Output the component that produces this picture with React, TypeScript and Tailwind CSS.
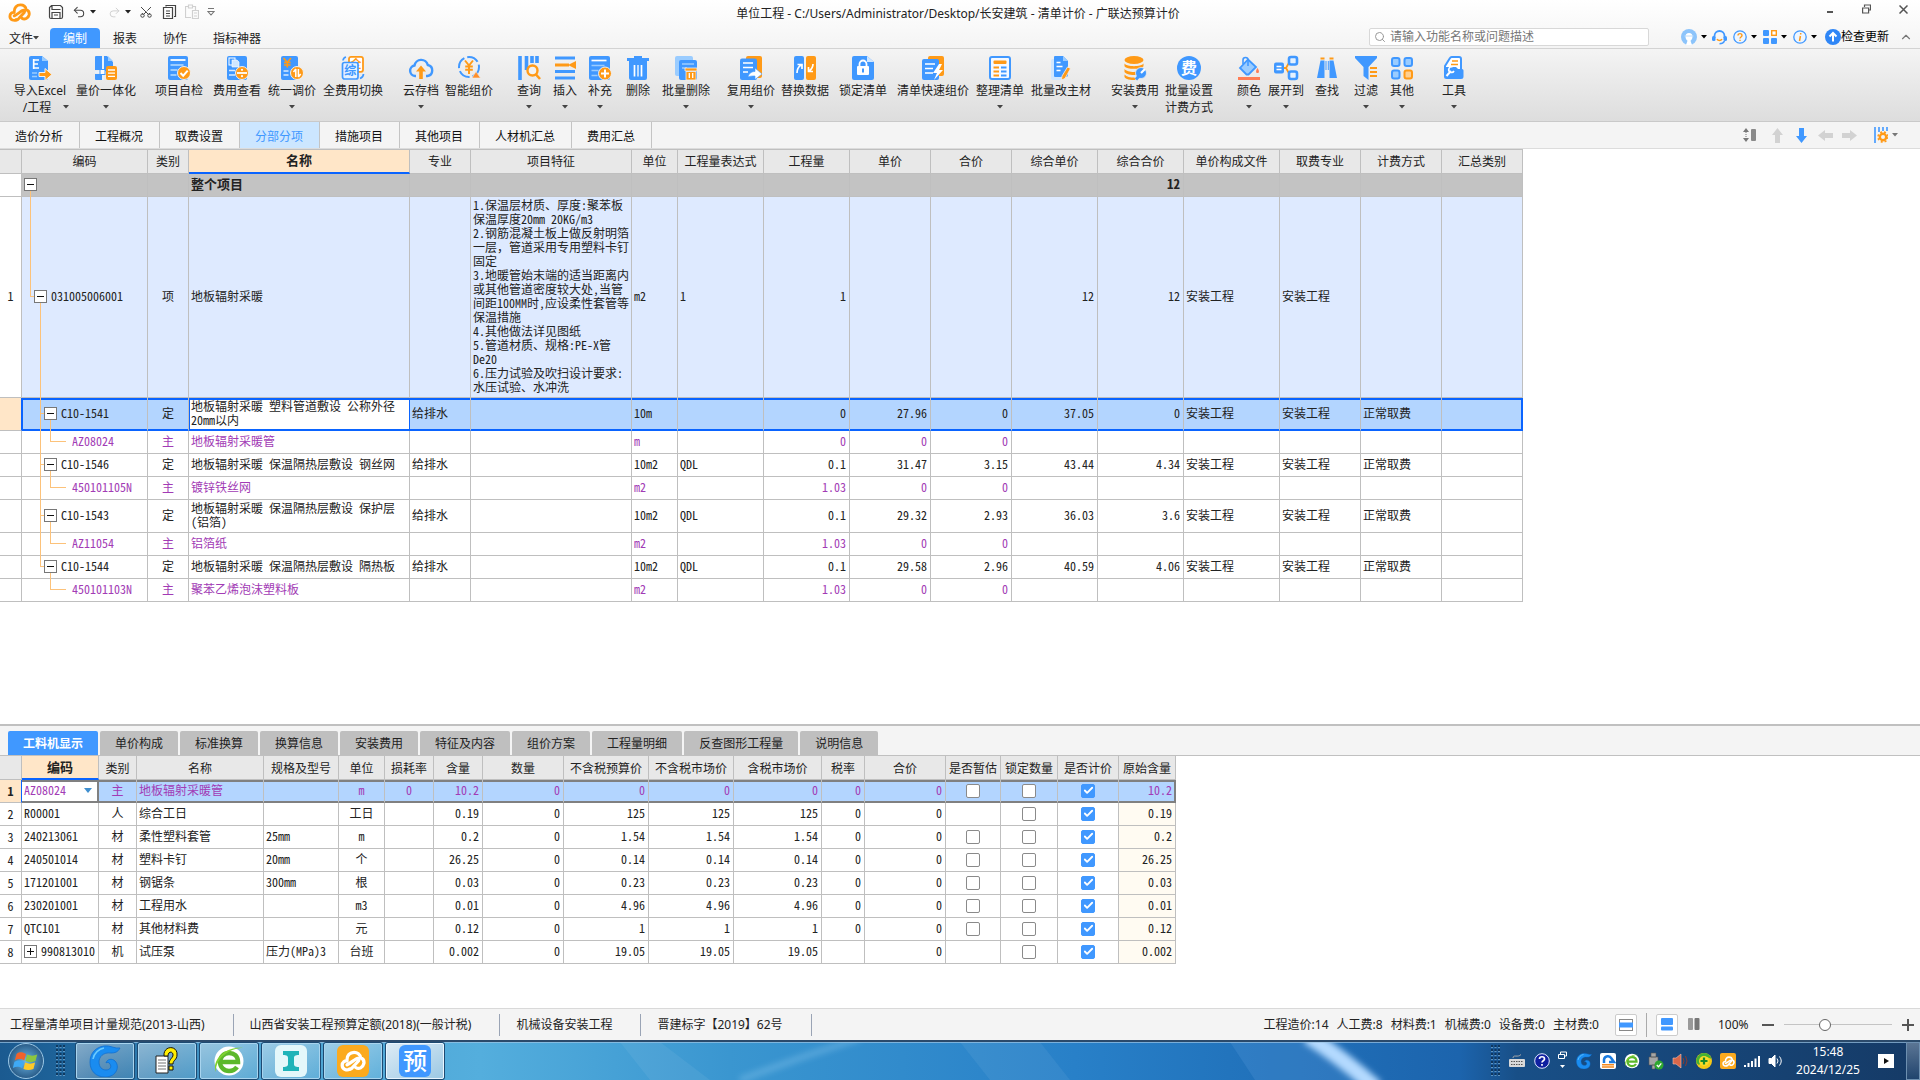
import React from "react";
import { Check, ChevronUp, Search, Scissors, Undo2, Redo2 } from "lucide-react";

const B = "#4098ff";
const O = "#ff9a17";
const L = "#9accff";

const ui = "font-['Noto_Sans','Noto_Sans_CJK_SC',sans-serif]";
const grid = "font-['Noto_Sans_Mono_CJK_SC','Noto_Sans_CJK_SC',monospace]";

function Ico({ children }: { children: React.ReactNode }) {
  return (
    <svg viewBox="0 0 22 24" width="22" height="24" aria-hidden="true" className="overflow-visible">
      {children}
    </svg>
  );
}

const Glyph = ({ x, y, size, fill, children }: { x: number; y: number; size: number; fill: string; children: string }) => (
  <text x={x} y={y} fontSize={size} fill={fill} fontWeight="700" textAnchor="middle" fontFamily="Noto Sans CJK SC, sans-serif">
    {children}
  </text>
);

const icons: Record<string, React.ReactNode> = {
  excel: (
    <Ico>
      <path d="M2 0h11l6 5v17a2 2 0 0 1-2 2H2a2 2 0 0 1-2-2V2a2 2 0 0 1 2-2z" fill={B} />
      <path d="M13 0l6 5h-6z" fill={L} />
      <path d="M4 4h6M4 8h5M4 12h6M4.700 3v10" stroke="#fff" strokeWidth="1.700" fill="none" />
      <path d="M3 17h5M3 20.500h5" stroke={L} strokeWidth="1.600" />
      <path d="M10 16.500h6v-4l7 6-7 6v-4h-6z" fill={O} stroke="#f2f2f2" strokeWidth="1" />
    </Ico>
  ),
  quantity: (
    <Ico>
      <path d="M1 0h6v14H0V1a1 1 0 0 1 1-1zM0 18h7v6H1a1 1 0 0 1-1-1z" fill={B} />
      <path d="M9 0h3l6 6v4h-5v6H9z" fill={B} />
      <path d="M13 0l5 5h-5z" fill={L} />
      <path d="M0 16h11M8 2v22" stroke="#e8f3ff" strokeWidth="1.500" />
      <rect x="5" y="13.500" width="5" height="5" fill="#fff" stroke={B} />
      <rect x="11" y="10" width="11" height="14" rx="2" fill={O} />
      <path d="M13 14h7M13 17.200h7M13 20.400h7" stroke="#fff" strokeWidth="1.300" />
    </Ico>
  ),
  check: (
    <Ico>
      <rect width="20" height="24" rx="2" fill={B} />
      <path d="M2.500 4h15" stroke="#fff" strokeWidth="1.800" />
      <path d="M2.500 9h13M2.500 14h7M2.500 19h6" stroke={L} strokeWidth="1.800" />
      <circle cx="16" cy="17" r="6.500" fill={O} stroke="#f0f0f0" />
      <path d="M12.500 17l2.700 2.700 4.500-5" stroke="#fff" strokeWidth="2" fill="none" />
    </Ico>
  ),
  view: (
    <Ico>
      <rect x="1" width="20" height="24" rx="2" fill={B} />
      <rect x="3" y="2" width="6" height="7" fill="none" stroke="#fff" />
      <path d="M6 4h5l2 2v5H6z" fill="#cfe6ff" stroke="#fff" strokeWidth=".6" />
      <path d="M3 14.500h6M3 19h6" stroke="#d7eaff" strokeWidth="1.600" />
      <circle cx="16" cy="17" r="6.500" fill={O} stroke="#f0f0f0" />
      <path d="M11 17h10" stroke="#fff" strokeWidth="1.800" />
      <circle cx="16" cy="13.800" r="1.100" fill="#fff" />
      <circle cx="16" cy="20.200" r="1.100" fill="#fff" />
    </Ico>
  ),
  adjust: (
    <Ico>
      <rect x="0" width="17" height="24" rx="2" fill={B} />
      <path d="M2.500 2l3.800 4.500L10 2M6.300 6v5.500M3 6.500h6.600M3 9h6.600" stroke={O} strokeWidth="1.700" fill="none" />
      <path d="M2.500 15h5M2.500 19h5" stroke="#d7eaff" strokeWidth="1.700" />
      <circle cx="16" cy="17" r="6.500" fill={O} stroke="#f0f0f0" />
      <path d="M14.800 13v8M12.500 16l2.300-3M17.400 13v8M19.700 18l-2.300 3" stroke="#fff" strokeWidth="1.500" fill="none" />
    </Ico>
  ),
  switch: (
    <Ico>
      <rect x="7" y=".800" width="14" height="15" rx="2" fill="#fff" stroke={O} strokeWidth="1.800" />
      <Glyph x={14} y={12} size={11} fill={O}>全</Glyph>
      <rect x=".5" y="6.500" width="15.500" height="16.500" rx="2" fill="#e4f1ff" stroke={B} strokeWidth="1.700" />
      <Glyph x={8.2} y={19} size={12} fill={B}>综</Glyph>
      <path d="M1 4.500a4 4 0 0 1 3-3.500M21.500 18a5 5 0 0 1-3.500 4.500" stroke={B} strokeWidth="1.700" fill="none" />
    </Ico>
  ),
  cloud: (
    <Ico>
      <path d="M6 20H5a5.300 5.300 0 0 1-.5-10.500A6.800 6.800 0 0 1 17.800 9 5.600 5.600 0 0 1 17.500 20H16" fill="none" stroke={B} strokeWidth="2.400" />
      <path d="M11 9.500l5 6h-3.200V23H9.200v-7.500H6z" fill={O} />
    </Ico>
  ),
  smart: (
    <Ico>
      <circle cx="11" cy="11" r="10" fill="none" stroke={B} strokeWidth="2" strokeDasharray="12 3" />
      <path d="M7 4.500l4 5 4-5M11 9v9M7.200 10.500h7.600M7.200 13.800h7.600" stroke={O} strokeWidth="2" fill="none" />
      <path d="M14 22l4-6.500 4.500 6.500z" fill="#ff8f2a" stroke="#eee" strokeWidth=".6" />
    </Ico>
  ),
  query: (
    <Ico>
      <path d="M2 0v24M8.500 0v14M14 0v7M19 0v7" stroke={B} strokeWidth="3.600" />
      <circle cx="14.500" cy="14.500" r="5" fill="#f3f3f3" stroke={O} strokeWidth="2.400" />
      <path d="M18 18.500l4 4.500" stroke={O} strokeWidth="2.600" />
    </Ico>
  ),
  insert: (
    <Ico>
      <path d="M1 2h20M1 15.500h20M1 22h20" stroke={B} strokeWidth="3.200" />
      <path d="M1 9h14" stroke={O} strokeWidth="3" />
      <path d="M22 5v8l-8-4z" fill={O} />
    </Ico>
  ),
  supplement: (
    <Ico>
      <rect width="21" height="24" rx="2" fill={B} />
      <path d="M2.500 4.500h15" stroke="#fff" strokeWidth="1.700" />
      <path d="M2.500 9.500h13M2.500 14.500h7M2.500 19.500h6" stroke={L} strokeWidth="1.700" />
      <circle cx="16" cy="17.500" r="6.500" fill={O} stroke="#f0f0f0" />
      <path d="M16 13.500v8M12 17.500h8" stroke="#fff" strokeWidth="2" />
    </Ico>
  ),
  trash: (
    <Ico>
      <path d="M0 2h7V0h8v2h7v3H0zM2 5h18v17a2 2 0 0 1-2 2H4a2 2 0 0 1-2-2z" fill={B} />
      <path d="M7.500 9v11.500M14.500 9v11.500" stroke="#fff" strokeWidth="1.700" />
      <path d="M11 9v11.500" stroke="#fff" strokeWidth="1.300" />
    </Ico>
  ),
  batchTrash: (
    <Ico>
      <rect x="0" width="18" height="20" rx="2" fill={L} />
      <rect x="4" y="4" width="18" height="20" rx="2" fill={B} />
      <path d="M7 8h12M7 12h5" stroke={L} strokeWidth="1.600" />
      <path d="M10 12h12v3H10zM11 15.500h10V24H11z" fill={O} stroke="#f0f0f0" strokeWidth=".8" />
      <path d="M14.300 17v5M17.700 17v5" stroke="#fff" strokeWidth="1.300" />
    </Ico>
  ),
  reuse: (
    <Ico>
      <rect x="6" width="16" height="22" rx="2" fill={O} />
      <rect x="0" y="2.500" width="17" height="21.500" rx="2" fill={B} />
      <path d="M3 7h10M3 11.500h10M3 16h5" stroke="#fff" strokeWidth="1.700" />
      <path d="M8 21c1-4 4-5.500 7-5.500V12l7 6-7 5.500V20c-3 0-5 0-7 1z" fill="#fff" stroke={B} strokeWidth=".6" />
    </Ico>
  ),
  replace: (
    <Ico>
      <rect width="10" height="24" rx="2" fill={B} />
      <rect x="12" width="10" height="24" rx="2" fill={O} />
      <path d="M3 17c0-4 1-6 4-8M3.500 8.500H8V13" stroke="#fff" strokeWidth="1.700" fill="none" />
      <path d="M19 8c0 3-1 5-4 7M14.500 11v4.500H19" stroke="#fff" strokeWidth="1.700" fill="none" />
    </Ico>
  ),
  lock: (
    <Ico>
      <path d="M2 0h13l7 6v16a2 2 0 0 1-2 2H2a2 2 0 0 1-2-2V2a2 2 0 0 1 2-2z" fill={B} />
      <path d="M15 0l7 6h-7z" fill="#cfe6ff" />
      <rect x="5" y="10" width="12" height="9" rx="1" fill="#fff" />
      <path d="M7.500 10V8a3.500 3.500 0 0 1 7 0v2" stroke="#fff" strokeWidth="1.800" fill="none" />
      <path d="M11 12.500v4" stroke={B} strokeWidth="2" />
    </Ico>
  ),
  quick: (
    <Ico>
      <rect x="6" width="16" height="20" rx="2" fill={O} />
      <rect x="0" y="3" width="17" height="21" rx="2" fill={B} />
      <path d="M3 8h10M3 12.500h8M3 17h8" stroke="#fff" strokeWidth="1.700" />
      <path d="M17 8l-6 9h4l-3 7 9-10h-4l3-6z" fill="#fff" />
    </Ico>
  ),
  arrange: (
    <Ico>
      <rect x="1" y="1" width="20" height="22" rx="2" fill="#f5f9ff" stroke={B} strokeWidth="2" />
      <rect x="4.500" y="4.500" width="13" height="3.500" rx="1" fill={O} />
      <path d="M4.500 11.500h5.500M4.500 15.500h5.500M4.500 19.500h5.500" stroke={O} strokeWidth="2" />
      <path d="M12 11.500h5.500M12 15.500h5.500M12 19.500h5.500" stroke={B} strokeWidth="2" />
    </Ico>
  ),
  material: (
    <Ico>
      <rect x="1" y="3" width="14" height="21" rx="2" fill="#cfe6ff" />
      <path d="M5 0h8l5 5v14a2 2 0 0 1-2 2H5a1 1 0 0 1-1-1V1a1 1 0 0 1 1-1z" fill={B} />
      <path d="M13 0l5 5h-5z" fill={L} />
      <path d="M6.500 6.500h4M6.500 10.500h6M6.500 14.500h4" stroke="#fff" strokeWidth="1.600" />
      <path d="M17.500 11l3 1.500-5.500 10-3.500 1.500.5-4z" fill={O} stroke="#f0f0f0" strokeWidth=".8" />
    </Ico>
  ),
  coins: (
    <Ico>
      <ellipse cx="10" cy="4" rx="9.500" ry="4" fill={O} />
      <path d="M.5 7.500c2 3.500 17 3.500 19 0v2.700c-2 3.500-17 3.500-19 0zM.5 13c2 3 10 3.500 13 2.500l-2 3.500c-4 0-9.500-.5-11-3zM.5 18.500c2 2.500 6 3 10 3l1 2.500c-5 0-10-.5-11-3z" fill={O} />
      <circle cx="17" cy="17" r="5.500" fill={B} stroke="#eee" strokeWidth=".8" />
      <path d="M12 23.500l5-6" stroke={B} strokeWidth="3" />
      <path d="M17 17l4-4" stroke="#fff" strokeWidth="2.200" />
    </Ico>
  ),
  fee: (
    <Ico>
      <circle cx="11" cy="12" r="12" fill={B} />
      <Glyph x={11} y={17.500} size={16} fill="#fff">费</Glyph>
    </Ico>
  ),
  color: (
    <Ico>
      <path d="M10 3.500l8 7.500-7.500 7.500h-2L2 12z" fill={L} stroke={B} strokeWidth="1.800" />
      <path d="M5 8V4a2.500 2.500 0 0 1 5 0v6" stroke={B} strokeWidth="1.600" fill="none" />
      <path d="M19.500 12c2 3 1.800 5 0 5s-2-2 0-5z" fill="#ff7d55" />
      <rect x="0" y="21" width="22" height="3" fill="#ff7d55" />
    </Ico>
  ),
  expand: (
    <Ico>
      <path d="M7 12h4l4-7M11 12l4 7" stroke={O} strokeWidth="1.800" fill="none" />
      <rect x="-1" y="6.500" width="10" height="11" rx="2" fill={B} />
      <path d="M1.500 10.500h5M1.500 13.500h5" stroke="#fff" strokeWidth="1.300" />
      <rect x="14" y="1" width="8" height="7.500" rx="2" fill="#e4f1ff" stroke={B} strokeWidth="2.600" />
      <rect x="14" y="15.500" width="8" height="7.500" rx="2" fill="#e4f1ff" stroke={B} strokeWidth="2.600" />
    </Ico>
  ),
  find: (
    <Ico>
      <path d="M4.500 2.500h4M13.500 2.500h4" stroke={O} strokeWidth="2" />
      <path d="M4.500 4.500h4V22H1zM13.500 4.500h4L21 22h-7.500z" fill={B} />
      <path d="M9.500 5h1v9h-1zM11.800 5h1v9h-1z" fill={B} />
    </Ico>
  ),
  filter: (
    <Ico>
      <path d="M0 0h22v2l-8.500 9v13L8.500 20v-9L0 2z" fill={B} />
      <path d="M15 12h7M15 16h7M15 20h7" stroke={O} strokeWidth="1.800" />
    </Ico>
  ),
  other: (
    <Ico>
      <rect x="1" y="2" width="7.500" height="8" rx="2" fill={L} stroke={B} strokeWidth="2" />
      <rect x="13.500" y="2" width="7.500" height="8" rx="2" fill={L} stroke={B} strokeWidth="2" />
      <rect x="1" y="14.500" width="7.500" height="8" rx="2" fill={L} stroke={B} strokeWidth="2" />
      <rect x="13.500" y="14.500" width="7.500" height="8" rx="2" fill="#ffcf90" stroke={O} strokeWidth="2" />
    </Ico>
  ),
  tool: (
    <Ico>
      <path d="M2 10l5-8a2 2 0 0 1 2-1h7a2 2 0 0 1 2 2v12H2z" fill="#fff" stroke={B} strokeWidth="2" />
      <path d="M9 5h6M8 8.500h7" stroke={O} strokeWidth="1.700" />
      <path d="M1 11h12l2 2h4a1.500 1.500 0 0 1 1.500 1.500v6A2.500 2.500 0 0 1 18 23H3.500A2.500 2.500 0 0 1 1 20.500z" fill={B} />
      <path d="M3.500 20l4.500-5" stroke="#fff" strokeWidth="2" />
      <path d="M9.500 11a2.800 2.800 0 1 0 1.500 4" stroke="#fff" strokeWidth="1.600" fill="none" />
    </Ico>
  ),
};

type Tool = { icon: string; label: string; second?: string; caret?: boolean; w: string };
const groups: Tool[][] = [
  [
    { icon: "excel", label: "导入Excel", second: "/工程", caret: true, w: "w-16" },
    { icon: "quantity", label: "量价一体化", caret: true, w: "w-[68px]" },
  ],
  [
    { icon: "check", label: "项目自检", w: "w-[54px]" },
    { icon: "view", label: "费用查看", w: "w-[62px]" },
    { icon: "adjust", label: "统一调价", caret: true, w: "w-12" },
    { icon: "switch", label: "全费用切换", w: "w-[74px]" },
  ],
  [
    { icon: "cloud", label: "云存档", caret: true, w: "w-[38px]" },
    { icon: "smart", label: "智能组价", w: "w-[58px]" },
  ],
  [
    { icon: "query", label: "查询", caret: true, w: "w-[38px]" },
    { icon: "insert", label: "插入", caret: true, w: "w-[34px]" },
    { icon: "supplement", label: "补充", caret: true, w: "w-9" },
    { icon: "trash", label: "删除", w: "w-10" },
    { icon: "batchTrash", label: "批量删除", caret: true, w: "w-14" },
  ],
  [
    { icon: "reuse", label: "复用组价", caret: true, w: "w-[50px]" },
    { icon: "replace", label: "替换数据", w: "w-[58px]" },
    { icon: "lock", label: "锁定清单", w: "w-[58px]" },
    { icon: "quick", label: "清单快速组价", w: "w-[82px]" },
    { icon: "arrange", label: "整理清单", caret: true, w: "w-[52px]" },
    { icon: "material", label: "批量改主材", w: "w-[70px]" },
  ],
  [
    { icon: "coins", label: "安装费用", caret: true, w: "w-[54px]" },
    { icon: "fee", label: "批量设置", second: "计费方式", w: "w-[54px]" },
  ],
  [
    { icon: "color", label: "颜色", caret: true, w: "w-[42px]" },
    { icon: "expand", label: "展开到", caret: true, w: "w-8" },
    { icon: "find", label: "查找", w: "w-[50px]" },
    { icon: "filter", label: "过滤", caret: true, w: "w-7" },
    { icon: "other", label: "其他", caret: true, w: "w-11" },
  ],
  [{ icon: "tool", label: "工具", caret: true, w: "w-9" }],
];

function Caret({ color = "#444" }: { color?: string }) {
  return (
    <svg width="6" height="4" viewBox="0 0 6 4" aria-hidden="true" className="shrink-0">
      <path d="M0 0h6L3 3.500z" fill={color} />
    </svg>
  );
}

function CloudMark({ color, size }: { color: string; size: number }) {
  return (
    <svg width={size} height={size} viewBox="0 0 24 20" fill="none" stroke={color} strokeWidth="3" strokeLinecap="round" strokeLinejoin="round" aria-hidden="true">
      <path d="M9 17.500c-2.500 1.500-7 .5-7-3.500 0-3 2.500-4.500 4.500-4C6 4.500 9.500 2 13 2c3 0 5.500 2 6 5 2.500 1 3.500 3 3 5.500-.8 3.500-4.500 5.500-7.500 3.500" />
      <path d="M6.500 13.500c3-1.500 6-4 8.500-5.500 2-1 3 .5 2 2L11.500 16c-1 1.500-2.500 1.800-3 1.500" />
    </svg>
  );
}

function TitleBar() {
  return (
    <header className="border-b border-[#d3d3d3] bg-linear-to-b from-white to-[#f4f4f4]">
      <div className="flex h-7 items-start">
        <div className="flex h-6 flex-1 items-center pl-2">
          <CloudMark color={O} size={23} />
          <div className="flex items-center gap-2 pl-[17px] text-[#444]">
            <button aria-label="保存">
              <svg width="16" height="16" viewBox="0 0 16 16" fill="none" stroke="currentColor" strokeWidth="1.200">
                <path d="M3.500 1.500h9l2 2v9.500a1.500 1.500 0 0 1-1.500 1.500H3A1.500 1.500 0 0 1 1.500 13V3.500z M4 1.500v4h8.500M4 14.500V8.500h8v6M6 11h4" />
              </svg>
            </button>
            <button aria-label="撤销" className="flex items-center gap-1">
              <Undo2 size={14} strokeWidth={1.8} />
              <Caret color="#222" />
            </button>
            <button aria-label="恢复" className="flex items-center gap-1 pl-1 text-[#d0d0d0]">
              <Redo2 size={13} strokeWidth={1.8} />
              <Caret color="#222" />
            </button>
            <button aria-label="剪切"><Scissors size={14} strokeWidth={1.7} className="-rotate-90" /></button>
            <button aria-label="复制">
              <svg width="16" height="16" viewBox="0 0 16 16" fill="none" stroke="currentColor" strokeWidth="1.200">
                <path d="M5 2.500v-1h9.500v11H13M2.500 3.500h9v11h-9zM5 7h4M5 9.500h4M5 12h4" />
              </svg>
            </button>
            <button aria-label="粘贴" className="text-[#d0d0d0]">
              <svg width="14" height="16" viewBox="1 0 14 16" fill="none" stroke="currentColor" strokeWidth="1.200">
                <path d="M7 13.500H1.500v-11H5M9 2.500h2.500V6M4.500 1h4v3h-4zM8.500 6.500h6v8h-6zM10 9h3M10 12h3" />
              </svg>
            </button>
            <button aria-label="自定义工具栏">
              <svg width="8" height="10" viewBox="0 0 8 10" fill="none" stroke="#777" strokeWidth="1.100">
                <path d="M1 1.500h6M1 4.500h6L4 8z" />
              </svg>
            </button>
          </div>
        </div>
        <h1 className="pt-1 text-xs leading-5 text-[#222]">单位工程 - C:/Users/Administrator/Desktop/长安建筑 - 清单计价 - 广联达预算计价</h1>
        <div className="flex flex-1 items-center justify-end gap-7 pt-1 pr-3 text-[#555]">
          <button aria-label="最小化"><svg width="8" height="10"><path d="M1 8h6" stroke="currentColor" strokeWidth="2" /></svg></button>
          <button aria-label="还原">
            <svg width="9" height="10" viewBox="0 0 9 10" fill="none" stroke="currentColor" strokeWidth="1.200"><path d="M2.500 3V1h6v5h-2M.6 4h6v5h-6z" /></svg>
          </button>
          <button aria-label="关闭"><svg width="9" height="9" viewBox="0 0 9 9" stroke="currentColor" strokeWidth="1.500"><path d="M.5.5l8 8M8.500.5l-8 8" /></svg></button>
        </div>
      </div>
      <div className="flex h-5 items-center text-xs text-[#222]">
        <nav className="flex h-full flex-1 items-stretch leading-[21px]">
          <button className="flex w-[50px] items-center pl-[9px]">文件<Caret /></button>
          <button className="w-[50px] rounded-t-sm bg-[#4098ff] text-white">编制</button>
          <button className="w-[50px]">报表</button>
          <button className="w-[50px]">协作</button>
          <button className="w-[74px]">指标神器</button>
        </nav>
        <div className="mb-0.5 flex h-[18px] w-[280px] items-center gap-1 rounded-xs border border-[#d8d8d8] bg-white px-1">
          <Search size={12} color="#999" />
          <input aria-label="搜索功能" className="min-w-0 flex-1 text-xs leading-4 placeholder-[#777] outline-none" placeholder="请输入功能名称或问题描述" />
        </div>
        <div className="mb-0.5 flex items-center pr-[7px] pl-8">
          <button aria-label="用户" className="flex items-center gap-1 pr-[5px]">
            <svg width="16" height="16" viewBox="0 0 16 16"><circle cx="8" cy="8" r="8" fill="#8cc4fb" /><path d="M4.500 7.500a3.500 3.500 0 0 1 7 0c0 2-.8 3.500-2 4.200L11 16H5l1.500-4.300c-1.200-.7-2-2.200-2-4.200z" fill="#fff" /><path d="M3.500 7h9" stroke="#bcdcfb" /></svg>
            <Caret color="#000" />
          </button>
          <button aria-label="客服" className="pr-[6px]">
            <svg width="15" height="15" viewBox="0 0 15 15" fill="none"><path d="M2.500 8V6a5 5 0 0 1 10 0v2" stroke={B} strokeWidth="1.800" /><rect x="0" y="6" width="3.500" height="5" rx="1.500" fill={B} /><rect x="11.500" y="6" width="3.500" height="5" rx="1.500" fill={B} /><path d="M5 9a2.800 2.800 0 0 0 5 0" stroke={O} strokeWidth="1.500" /><path d="M12.500 11c-1 2-3 2.800-5 2.800" stroke={B} strokeWidth="1.500" /></svg>
          </button>
          <button aria-label="帮助" className="flex items-center gap-1 pr-[6px]">
            <svg width="14" height="14" viewBox="0 0 14 14"><circle cx="7" cy="7" r="6.200" fill="#eef6ff" stroke={B} strokeWidth="1.300" /><path d="M5 5.500c0-2.500 4-2.500 4 0 0 1.400-2 1.500-2 3M7 9.700v1.300" fill="none" stroke={O} strokeWidth="1.400" /></svg>
            <Caret color="#000" />
          </button>
          <button aria-label="应用" className="flex items-center gap-1 pr-[6px]">
            <svg width="14" height="14" viewBox="0 0 14 14"><rect width="6" height="6" rx="1" fill={B} /><rect y="8" width="6" height="6" rx="1" fill={B} /><rect x="8" y="8" width="6" height="6" rx="1" fill={B} /><rect x="8.700" y=".7" width="4.600" height="4.600" fill="#fff" stroke={O} strokeWidth="1.400" /></svg>
            <Caret color="#000" />
          </button>
          <button aria-label="关于" className="flex items-center gap-1 pr-2">
            <svg width="14" height="14" viewBox="0 0 14 14"><circle cx="7" cy="7" r="6.200" fill="#eef6ff" stroke={B} strokeWidth="1.300" /><path d="M7.700 3v1.500M7.400 6l-.9 5" fill="none" stroke={O} strokeWidth="1.500" /></svg>
            <Caret color="#000" />
          </button>
          <button className="flex items-center text-black">
            <svg width="16" height="16" viewBox="0 0 16 16"><circle cx="8" cy="8" r="8" fill="#2f86f6" /><path d="M8 12.500v-8M4.500 7.500L8 4l3.500 3.500" fill="none" stroke="#fff" strokeWidth="2" /></svg>
            检查更新
          </button>
          <button aria-label="收起功能区" className="pl-[10px] text-[#777]"><ChevronUp size={14} strokeWidth={2} /></button>
        </div>
      </div>
    </header>
  );
}

function Ribbon() {
  return (
    <div className="flex h-[73px] gap-3 border-b border-[#c9c9c9] bg-linear-to-b from-[#f4f4f4] to-[#dddddd] pt-[7px] pl-2 text-xs text-[#222]">
      {groups.map((g, i) => (
        <div key={i} className="flex">
          {g.map((t) => (
            <button key={t.label} className={`flex flex-col items-center ${t.w}`}>
              {icons[t.icon]}
              <span className="mt-[2px] leading-[17px] whitespace-nowrap">{t.label}</span>
              <span className="flex h-4 items-center gap-3 leading-4 whitespace-nowrap">
                {t.second && <span className={t.caret ? "pt-0.5 pl-3" : "pt-0.5"}>{t.second}</span>}
                {t.caret && <Caret />}
              </span>
            </button>
          ))}
        </div>
      ))}
    </div>
  );
}

function Arrow({ color, turn }: { color: string; turn: string }) {
  return (
    <svg width="15" height="15" viewBox="0 0 15 15" className={turn} aria-hidden="true">
      <path d="M7.500 0L13 7h-3v8H5V7H2z" fill={color} />
    </svg>
  );
}

const pages = ["造价分析", "工程概况", "取费设置", "分部分项", "措施项目", "其他项目", "人材机汇总", "费用汇总"];

function PageTabs() {
  return (
    <div className="flex h-[26px] items-stretch bg-[#f4f4f4] text-xs text-[#111]">
      <nav className="flex flex-1">
        {pages.map((p) => (
          <button
            key={p}
            className={`border-r border-[#c4c4c4] pt-1 pr-4 pl-[15px] ${p === "分部分项" ? "bg-[#cce6ff] text-[#4098ff]" : ""}`}
          >
            {p}
          </button>
        ))}
      </nav>
      <div className="flex items-center gap-[9px] pr-[22px]">
        <button aria-label="行高" className="pr-1">
          <svg width="14" height="14" viewBox="0 0 14 14"><path d="M0 4l3-4 3 4zM0 10l3 4 3-4z" fill="#777" /><path d="M3 4v6" stroke="#777" strokeDasharray="1 1" /><rect x="8" y="1" width="5" height="12" rx="1" fill="#8a8a8a" /></svg>
        </button>
        <button aria-label="上移"><Arrow color="#d2d2d2" turn="" /></button>
        <button aria-label="下移"><Arrow color={B} turn="rotate-180" /></button>
        <button aria-label="升级"><Arrow color="#d2d2d2" turn="-rotate-90" /></button>
        <button aria-label="降级"><Arrow color="#d2d2d2" turn="rotate-90" /></button>
        <button aria-label="列设置" className="flex items-center gap-1 pl-2">
          <svg width="14" height="16" viewBox="0 0 14 16"><path d="M1 0v16M5 0v5M9 0v4M13 0v4" stroke={B} strokeWidth="1.600" /><circle cx="9" cy="10" r="3.200" fill="none" stroke={O} strokeWidth="2.400" /><circle cx="9" cy="10" r="5" fill="none" stroke={O} strokeWidth="1.500" strokeDasharray="2 2" /></svg>
          <Caret color="#777" />
        </button>
      </div>
    </div>
  );
}

function Toggle({ open }: { open: boolean }) {
  return (
    <button aria-label={open ? "折叠" : "展开"} className="relative z-10 flex size-[13px] shrink-0 items-center justify-center border border-[#777] bg-white">
      <svg width="7" height="7" viewBox="0 0 7 7" stroke="#111" aria-hidden="true">
        <path d={open ? "M0 3.500h7" : "M0 3.500h7M3.500 0v7"} />
      </svg>
    </button>
  );
}

const itemCols = ["w-[22px]", "w-[126px]", "w-[41px]", "w-[221px]", "w-[61px]", "w-[161px]", "w-[46px]", "w-[86px]", "w-[86px]", "w-[81px]", "w-[81px]", "w-[86px]", "w-[86px]", "w-[96px]", "w-[81px]", "w-[81px]", "w-[81px]"];
const itemHead = ["", "编码", "类别", "名称", "专业", "项目特征", "单位", "工程量表达式", "工程量", "单价", "合价", "综合单价", "综合合价", "单价构成文件", "取费专业", "计费方式", "汇总类别"];
const itemAlign = ["text-center", "text-left", "text-center", "text-left", "text-left", "text-left", "text-left", "text-left", "text-right", "text-right", "text-right", "text-right", "text-right", "text-left", "text-left", "text-left", "text-left"];

const cellPad: Record<string, string> = {
  "text-center": "px-0 pt-0 pb-0.5",
  "text-left": "pt-0 pr-0 pb-0.5 pl-[2px]",
  "text-right": "pt-0 pr-[3px] pb-0.5 pl-0",
};

type Kind = "root" | "item" | "selected" | "quota" | "leaf";
type Item = { kind: Kind; h: string; last?: boolean; cells: string[] };

const feature =
  "1.保温层材质、厚度:聚苯板\n保温厚度20mm 20KG/m3\n2.钢筋混凝土板上做反射明箔\n一层，管道采用专用塑料卡钉\n固定\n3.地暖管始末端的适当距离内\n或其他管道密度较大处,当管\n间距100MM时,应设柔性套管等\n保温措施\n4.其他做法详见图纸\n5.管道材质、规格:PE-X管\nDe20\n6.压力试验及吹扫设计要求:\n水压试验、水冲洗";

const items: Item[] = [
  { kind: "root", h: "h-[23px]", cells: ["", "", "", "整个项目", "", "", "", "", "", "", "", "", "12", "", "", "", ""] },
  { kind: "item", h: "h-[201px]", cells: ["1", "031005006001", "项", "地板辐射采暖", "", feature, "m2", "1", "1", "", "", "12", "12", "安装工程", "安装工程", "", ""] },
  { kind: "selected", h: "h-[33px]", cells: ["", "C10-1541", "定", "地板辐射采暖 塑料管道敷设 公称外径\n20mm以内", "给排水", "", "10m", "", "0", "27.96", "0", "37.05", "0", "安装工程", "安装工程", "正常取费", ""] },
  { kind: "leaf", h: "h-[23px]", cells: ["", "AZ08024", "主", "地板辐射采暖管", "", "", "m", "", "0", "0", "0", "", "", "", "", "", ""] },
  { kind: "quota", h: "h-[23px]", cells: ["", "C10-1546", "定", "地板辐射采暖 保温隔热层敷设 钢丝网", "给排水", "", "10m2", "QDL", "0.1", "31.47", "3.15", "43.44", "4.34", "安装工程", "安装工程", "正常取费", ""] },
  { kind: "leaf", h: "h-[23px]", cells: ["", "450101105N", "主", "镀锌铁丝网", "", "", "m2", "", "1.03", "0", "0", "", "", "", "", "", ""] },
  { kind: "quota", h: "h-[33px]", cells: ["", "C10-1543", "定", "地板辐射采暖 保温隔热层敷设 保护层\n(铝箔)", "给排水", "", "10m2", "QDL", "0.1", "29.32", "2.93", "36.03", "3.6", "安装工程", "安装工程", "正常取费", ""] },
  { kind: "leaf", h: "h-[23px]", cells: ["", "AZ11054", "主", "铝箔纸", "", "", "m2", "", "1.03", "0", "0", "", "", "", "", "", ""] },
  { kind: "quota", h: "h-[23px]", last: true, cells: ["", "C10-1544", "定", "地板辐射采暖 保温隔热层敷设 隔热板", "给排水", "", "10m2", "QDL", "0.1", "29.58", "2.96", "40.59", "4.06", "安装工程", "安装工程", "正常取费", ""] },
  { kind: "leaf", h: "h-[23px]", last: true, cells: ["", "450101103N", "主", "聚苯乙烯泡沫塑料板", "", "", "m2", "", "1.03", "0", "0", "", "", "", "", "", ""] },
];

const tree = "absolute border-[#fcc27a]";

function CodeCell({ row }: { row: Item }) {
  const code = row.cells[1];
  switch (row.kind) {
    case "root":
      return (
        <div className="pl-[2px]">
          <span className={`${tree} top-1/2 -bottom-px left-[8px] border-l`} />
          <Toggle open />
        </div>
      );
    case "item":
      return (
        <div className="flex items-center gap-1 pl-[12px]">
          <span className={`${tree} top-0 bottom-1/2 left-[8px] w-1 border-b border-l`} />
          <span className={`${tree} top-1/2 -bottom-px left-[18px] border-l`} />
          <Toggle open />
          {code}
        </div>
      );
    case "leaf":
      return (
        <div className="pl-[50px]">
          {!row.last && <span className={`${tree} top-0 -bottom-px left-[18px] border-l`} />}
          <span className={`${tree} top-0 bottom-1/2 left-[28px] w-4 border-b border-l`} />
          {code}
        </div>
      );
    default:
      return (
        <div className="flex items-center gap-1 pl-[22px]">
          <span className={`${tree} top-0 bottom-1/2 left-[18px] w-1 border-b border-l`} />
          {!row.last && <span className={`${tree} top-1/2 -bottom-px left-[18px] border-l`} />}
          <span className={`${tree} top-1/2 -bottom-px left-[28px] border-l`} />
          <Toggle open />
          {code}
        </div>
      );
  }
}

const itemTone: Record<Kind, string> = {
  root: "bg-[#c3c3c3] font-bold text-[13px]",
  item: "bg-[#deeaff]",
  selected: "bg-[#b3d5ff]",
  quota: "bg-white",
  leaf: "bg-white text-[#a23bb5]",
};

function itemEdge(kind: Kind, c: number) {
  if (c === 0) return kind === "selected" ? "border-[#bfbfbf] border-r-[#0a64ff] bg-[#ffe6c8]" : "border-[#bfbfbf] bg-white";
  if (kind !== "selected") return `border-[#bfbfbf] ${itemTone[kind]}`;
  if (c === 1) return "border-[#bfbfbf] border-b-[#0a64ff] bg-[#b3d5ff] shadow-[inset_1px_0_0_#0a64ff,inset_0_2px_0_#0a64ff,inset_0_-1px_0_#0a64ff]";
  if (c === 3) return "border-[#0a64ff] bg-white shadow-[inset_1px_0_0_#0a64ff,inset_0_2px_0_#0a64ff,inset_0_-1px_0_#0a64ff]";
  if (c === 16) return "border-[#0a64ff] bg-[#b3d5ff] shadow-[inset_-1px_0_0_#0a64ff,inset_0_2px_0_#0a64ff,inset_0_-1px_0_#0a64ff]";
  return "border-[#bfbfbf] border-b-[#0a64ff] bg-[#b3d5ff] shadow-[inset_0_2px_0_#0a64ff,inset_0_-1px_0_#0a64ff]";
}

function ItemTable() {
  return (
    <table className={`w-[1523px] table-fixed border-separate border-spacing-0 border-t border-[#bfbfbf] text-xs leading-[14px] text-[#222] ${grid}`}>
      <colgroup>{itemCols.map((w, i) => <col key={i} className={w} />)}</colgroup>
      <thead>
        <tr className="h-6">
          {itemHead.map((h, i) => (
            <th
              key={i}
              className={
                i === 3
                  ? "border-r border-b-2 border-r-[#bfbfbf] border-b-[#0a64ff] bg-[#ffe6c8] px-0 pt-0 pb-0.5 text-[13px] font-bold"
                  : "border-r border-b border-[#bfbfbf] bg-[#e8e8e8] px-0 pt-0 pb-0.5 font-normal whitespace-nowrap"
              }
            >
              {h}
            </th>
          ))}
        </tr>
      </thead>
      <tbody>
        {items.map((row, r) => (
          <tr key={r} className={row.h}>
            {row.cells.map((v, c) => (
              <td key={c} className={`relative border-r border-b whitespace-pre ${c === 1 ? "px-0 pt-0 pb-0.5" : cellPad[itemAlign[c]]} ${itemAlign[c]} ${itemEdge(row.kind, c)}`}>
                {c === 1 ? <CodeCell row={row} /> : v}
              </td>
            ))}
          </tr>
        ))}
      </tbody>
    </table>
  );
}

const detailTabs = ["工料机显示", "单价构成", "标准换算", "换算信息", "安装费用", "特征及内容", "组价方案", "工程量明细", "反查图形工程量", "说明信息"];
const resCols = ["w-[22px]", "w-[77px]", "w-[38px]", "w-[127px]", "w-[75px]", "w-[46px]", "w-[49px]", "w-[49px]", "w-[81px]", "w-[85px]", "w-[85px]", "w-[88px]", "w-[43px]", "w-[81px]", "w-[55px]", "w-[57px]", "w-[61px]", "w-[57px]"];
const resHead = ["", "编码", "类别", "名称", "规格及型号", "单位", "损耗率", "含量", "数量", "不含税预算价", "不含税市场价", "含税市场价", "税率", "合价", "是否暂估", "锁定数量", "是否计价", "原始含量"];
const resAlign = ["text-center", "text-left", "text-center", "text-left", "text-left", "text-center", "text-center", "text-right", "text-right", "text-right", "text-right", "text-right", "text-right", "text-right", "text-center", "text-center", "text-center", "text-right"];
const resources: string[][] = [
  ["1", "AZ08024", "主", "地板辐射采暖管", "", "m", "0", "10.2", "0", "0", "0", "0", "0", "0", "off", "off", "on", "10.2"],
  ["2", "R00001", "人", "综合工日", "", "工日", "", "0.19", "0", "125", "125", "125", "0", "0", "", "off", "on", "0.19"],
  ["3", "240213061", "材", "柔性塑料套管", "25mm", "m", "", "0.2", "0", "1.54", "1.54", "1.54", "0", "0", "off", "off", "on", "0.2"],
  ["4", "240501014", "材", "塑料卡钉", "20mm", "个", "", "26.25", "0", "0.14", "0.14", "0.14", "0", "0", "off", "off", "on", "26.25"],
  ["5", "171201001", "材", "钢锯条", "300mm", "根", "", "0.03", "0", "0.23", "0.23", "0.23", "0", "0", "off", "off", "on", "0.03"],
  ["6", "230201001", "材", "工程用水", "", "m3", "", "0.01", "0", "4.96", "4.96", "4.96", "0", "0", "off", "off", "on", "0.01"],
  ["7", "QTC101", "材", "其他材料费", "", "元", "", "0.12", "0", "1", "1", "1", "0", "0", "off", "off", "on", "0.12"],
  ["8", "990813010", "机", "试压泵", "压力(MPa)3", "台班", "", "0.002", "0", "19.05", "19.05", "19.05", "", "0", "", "off", "on", "0.002"],
];

function Tick({ on, label }: { on: boolean; label: string }) {
  return (
    <span className="inline-grid size-[14px] place-items-center align-middle">
      <input type="checkbox" aria-label={label} defaultChecked={on} className="peer col-start-1 row-start-1 size-[14px] appearance-none rounded-xs border border-[#8a8a8a] bg-white checked:border-[#4098ff] checked:bg-[#4098ff]" />
      <Check size={11} strokeWidth={4} color="#fff" className="pointer-events-none col-start-1 row-start-1 hidden peer-checked:block" />
    </span>
  );
}

function resEdge(r: number, c: number) {
  if (r > 0) return `border-[#bfbfbf] ${c === 17 ? "bg-[#fffbf2]" : "bg-white"}`;
  if (c === 0) return "border-[#bfbfbf] border-r-[#0a64ff] bg-[#ffe6c8] font-bold";
  if (c === 1) return "border-[#808080] bg-white text-[#a23bb5] shadow-[inset_-1px_0_0_#808080,inset_0_2px_0_#808080,inset_0_-1px_0_#808080]";
  if (c === 17) return "border-[#808080] bg-[#b3d5ff] text-[#a23bb5] shadow-[inset_-1px_0_0_#808080,inset_0_2px_0_#808080,inset_0_-1px_0_#808080]";
  return "border-[#bfbfbf] border-b-[#808080] bg-[#b3d5ff] text-[#a23bb5] shadow-[inset_0_2px_0_#808080,inset_0_-1px_0_#808080]";
}

function ResourceCell({ row, c }: { row: string[]; c: number }) {
  const v = row[c];
  if (v === "on" || v === "off") return <Tick on={v === "on"} label={`${resHead[c]} ${row[3]}`} />;
  if (c === 1 && row[0] === "1")
    return (
      <span className="flex items-center justify-between pr-[6px]">
        {v}
        <button aria-label="选择编码">
          <svg width="8" height="5" viewBox="0 0 8 5"><path d="M0 0h8L4 5z" fill="#3f8fd0" /></svg>
        </button>
      </span>
    );
  if (c === 1 && row[0] === "8")
    return (
      <span className="flex items-center gap-1">
        <Toggle open={false} />
        {v}
      </span>
    );
  return <>{v}</>;
}

function DetailPane() {
  return (
    <section className="flex h-[284px] shrink-0 flex-col border-t-2 border-[#c0c0c0] bg-white">
      <div className="flex h-[30px] items-end gap-[2px] border-b border-[#c0c0c0] bg-[#f4f4f4] pl-2 text-xs text-[#222]">
        {detailTabs.map((t, i) => (
          <button key={t} className={i === 0 ? "h-6 rounded-t-xs bg-[#4098ff] px-[15px] pt-0.5 font-bold text-white" : "h-6 rounded-t-xs bg-[#bfbfbf] px-[15px] pt-0.5"}>
            {t}
          </button>
        ))}
      </div>
      <div className="min-h-0 flex-1 overflow-hidden">
        <table className={`w-[1176px] table-fixed border-separate border-spacing-0 text-xs leading-[14px] text-[#222] ${grid}`}>
          <colgroup>{resCols.map((w, i) => <col key={i} className={w} />)}</colgroup>
          <thead>
            <tr className="h-6">
              {resHead.map((h, i) => (
                <th
                  key={i}
                  className={
                    i === 1
                      ? "border-r border-b-2 border-r-[#bfbfbf] border-b-[#0a64ff] bg-[#ffe6c8] p-0 text-[13px] font-bold"
                      : "border-r border-b border-[#bfbfbf] bg-[#e8e8e8] p-0 font-normal whitespace-nowrap"
                  }
                >
                  {h}
                </th>
              ))}
            </tr>
          </thead>
          <tbody>
            {resources.map((row, r) => (
              <tr key={r} className="h-[23px]">
                {row.map((_, c) => (
                  <td key={c} className={`border-r border-b whitespace-pre ${c === 0 ? "p-0" : cellPad[resAlign[c]]} ${resAlign[c]} ${resEdge(r, c)}`}>
                    <ResourceCell row={row} c={c} />
                  </td>
                ))}
              </tr>
            ))}
          </tbody>
        </table>
      </div>
    </section>
  );
}

function StatusBar() {
  const left = ["工程量清单项目计量规范(2013-山西)", "山西省安装工程预算定额(2018)(一般计税)", "机械设备安装工程", "晋建标字【2019】62号"];
  const sums = ["工程造价:14", "人工费:8", "材料费:1", "机械费:0", "设备费:0", "主材费:0"];
  return (
    <footer className="flex h-8 shrink-0 items-center border-t border-[#d9d9d9] bg-[#f4f4f4] text-xs text-[#222]">
      <div className="flex flex-1 items-center">
        {left.map((t, i) => (
          <span key={t} className={`border-r border-[#9aa4b5] pr-7 leading-[22px] ${i === 0 ? "pl-[10px]" : "pl-4"}`}>{t}</span>
        ))}
      </div>
      <div className="flex gap-2 pr-4">
        {sums.map((s) => <span key={s}>{s}</span>)}
      </div>
      <button aria-label="显示方式" className="flex h-[22px] w-[22px] items-center justify-center rounded-xs border border-[#ccc] bg-white">
        <svg width="14" height="14" viewBox="0 0 14 14"><rect x=".5" y="1.500" width="13" height="11" fill="#fff" stroke="#888" /><rect x="0" y="4.500" width="14" height="5" fill={B} /></svg>
      </button>
      <span className="mx-[9px] h-6 border-l border-[#aaa]" />
      <button aria-label="上下布局" className="flex h-[22px] w-[22px] items-center justify-center rounded-xs border border-[#ccc] bg-white">
        <svg width="12" height="13" viewBox="0 0 12 13"><rect width="12" height="7" rx="1" fill={B} /><rect y="8.500" width="12" height="4" rx="1" fill={B} /></svg>
      </button>
      <button aria-label="左右布局" className="px-[10px]">
        <svg width="12" height="13" viewBox="0 0 12 13"><rect width="5" height="12" rx="1" fill="#999" /><rect x="6.500" width="5" height="12" rx="1" fill="#777" /></svg>
      </button>
      <span className="w-[52px] pl-2">100%</span>
      <button aria-label="缩小"><svg width="12" height="12"><path d="M0 6h12" stroke="#555" strokeWidth="2" /></svg></button>
      <input
        type="range"
        aria-label="缩放"
        min={10}
        max={260}
        defaultValue={100}
        className="mx-[10px] h-3 w-[108px] appearance-none bg-[linear-gradient(#c4c4c4,#c4c4c4)] bg-[length:100%_1px] bg-center bg-no-repeat [&::-webkit-slider-thumb]:size-3 [&::-webkit-slider-thumb]:appearance-none [&::-webkit-slider-thumb]:rounded-full [&::-webkit-slider-thumb]:border [&::-webkit-slider-thumb]:border-[#666] [&::-webkit-slider-thumb]:bg-white"
      />
      <button aria-label="放大" className="pr-[6px]"><svg width="12" height="12"><path d="M0 6h12M6 0v12" stroke="#555" strokeWidth="2" /></svg></button>
    </footer>
  );
}

function Grip() {
  return (
    <svg width="9" height="32" viewBox="0 0 9 32" aria-hidden="true">
      {[0, 4, 8, 12, 16, 20, 24, 28].map((y) => (
        <path key={y} d={`M0 ${y + 1}h2M3.500 ${y + 1}h2M7 ${y + 1}h2`} stroke="#0d2c4c" strokeWidth="1.500" />
      ))}
      {[0, 4, 8, 12, 16, 20, 24, 28].map((y) => (
        <path key={y} d={`M0 ${y + 2.5}h2M3.500 ${y + 2.5}h2M7 ${y + 2.5}h2`} stroke="#6ea3cc" strokeWidth=".8" />
      ))}
    </svg>
  );
}

function Swirl({ size }: { size: number }) {
  return (
    <svg width={size} height={size} viewBox="0 0 32 32" aria-hidden="true">
      <path d="M31 3c-2 4-5 5-9 5-8-1-12 4-12 9 0 5 3 8 7 8 4 0 6-3 4-6-1-2-3-2-4-1 1-4 6-5 9-2 5 5 2 16-10 16C7 32 1 26 1 17 1 8 7 2 15 1c6-1 11 3 16 2z" fill="#1a8cf0" stroke="#0f6fd0" strokeWidth=".8" />
      <path d="M4 14C5 8 10 4 15 3" fill="none" stroke="#6ccbff" strokeWidth="1.500" />
    </svg>
  );
}

function Browser({ size }: { size: number }) {
  return (
    <svg width={size} height={size} viewBox="0 0 32 32" aria-hidden="true">
      <circle cx="16" cy="16" r="14.500" fill="#fff" />
      <path d="M8 17h17c0-6-4-9-9-9s-9 4-9 9 4 9 9 9c3 0 6-1 8-4" fill="none" stroke="#5cb82b" strokeWidth="4.500" />
      <path d="M3 27C-2 16 12 1 30 3 16 3 2 14 3 27z" fill="#7fd12f" />
    </svg>
  );
}

const apps: { name: string; icon: React.ReactNode }[] = [
  { name: "广联达", icon: <Swirl size={32} /> },
  {
    name: "帮助文档",
    icon: (
      <svg width="26" height="28" viewBox="0 0 26 28">
        <path d="M2 9h12v17H2z" fill="#fff" stroke="#222" />
        <path d="M4 13h8M4 16h8M4 19h8M4 22h8" stroke="#777" />
        <path d="M10 9c-1-11 14-11 13-1 0 5-4 5-4 9h-4c0-5 4-6 4-9 0-4-5-4-5 1zM15 19h4v4h-4z" fill="#ffee00" stroke="#111" />
      </svg>
    ),
  },
  { name: "浏览器", icon: <Browser size={32} /> },
  {
    name: "算量",
    icon: (
      <svg width="32" height="32" viewBox="0 0 32 32">
        <rect width="32" height="32" rx="6" fill="#e4f7fa" />
        <path d="M8 6h16v4c-4 0-5 1-5 3v6c0 2 1 3 5 3v4H8v-4c4 0 5-1 5-3v-6c0-2-1-3-5-3z" fill="#1fb3b8" />
      </svg>
    ),
  },
  {
    name: "计价平台",
    icon: <span className="flex size-8 items-center justify-center rounded-md bg-[#fbaa1e]"><CloudMark color="#fff" size={26} /></span>,
  },
  {
    name: "预算",
    icon: <span className="flex size-8 items-center justify-center rounded-md bg-[#4098ff] text-2xl leading-8 font-medium text-white">预</span>,
  },
];

function Taskbar() {
  return (
    <div className="relative flex h-10 shrink-0 items-center overflow-hidden border-t-2 border-t-[#2b4a6b] bg-[#2880c8]">
      <svg className="absolute inset-0 h-full w-full" viewBox="0 0 1920 38" preserveAspectRatio="none" aria-hidden="true">
        <defs>
          <linearGradient id="sky">
            <stop offset="0" stopColor="#1b5a90" />
            <stop offset=".05" stopColor="#1f689f" />
            <stop offset=".12" stopColor="#4aa0cf" />
            <stop offset=".25" stopColor="#54aedd" />
            <stop offset=".38" stopColor="#3a96d0" />
            <stop offset=".56" stopColor="#2880c8" />
            <stop offset=".64" stopColor="#2274bd" />
            <stop offset=".76" stopColor="#1c64ad" />
            <stop offset=".79" stopColor="#184f87" />
            <stop offset="1" stopColor="#153a66" />
          </linearGradient>
          <filter id="soft" x="-20%" y="-20%" width="140%" height="140%"><feGaussianBlur stdDeviation="3" /></filter>
        </defs>
        <rect width="1920" height="38" fill="url(#sky)" />
        <path d="M620 0l30 38h60L660 0zM960 0l30 38h80L1040 0z" fill="#fff" opacity=".06" />
        <path d="M740 38Q800 15 860 -4" stroke="#9fd4f5" strokeWidth="6" fill="none" opacity=".35" filter="url(#soft)" />
        <path d="M1230 0l25 38h110L1320 0z" fill="#5b9cdb" opacity=".25" />
        <path d="M1308 -6Q1340 14 1376 46" stroke="#b4daff" strokeWidth="16" fill="none" filter="url(#soft)" />
        <rect width="1920" height="1" fill="#9cc4e4" opacity=".7" />
      </svg>
      <button aria-label="开始" className="relative ml-2 flex size-9 items-center justify-center rounded-full border border-[#9cc8e6] bg-radial from-[#6db8e8] to-[#123c66]">
        <svg width="26" height="26" viewBox="0 0 22 22">
          <path d="M3 5c3-2 5-1.500 8 0L9.500 10.500c-3-1.500-5-1.500-8 0z" fill="#f0622b" />
          <path d="M12 5.500c3 1.300 5.500 1.300 8.500 0L19 11c-3 1.300-5.500 1.300-8.500 0z" fill="#8cc63f" />
          <path d="M1.200 11.700c3-1.500 5-1.300 8 0L7.800 17c-3-1.300-5-1.500-8 0z" fill="#3fa9f5" />
          <path d="M10.200 12.300c3 1.300 5.500 1.300 8.500 0L17.300 17.700c-3 1.300-5.500 1.300-8.500 0z" fill="#ffc928" />
        </svg>
      </button>
      <div className="relative mr-2 ml-3"><Grip /></div>
      <div className="relative flex h-full flex-1 gap-1 pt-px pb-px pl-[3px]">
        {apps.map((a, i) => (
          <button
            key={a.name}
            aria-label={a.name}
            className={`flex w-[58px] items-center justify-center rounded-xs border shadow-[0_0_0_1px_#1d4a72] ${
              i === 5 ? "border-[#eaf6ff] bg-linear-to-br from-[#dcebf5] to-[#9cc9e4]" : "border-[#a8d4ee] bg-linear-to-br from-white/45 to-white/10"
            }`}
          >
            {a.icon}
          </button>
        ))}
      </div>
      <div className="relative flex h-full items-center text-white">
        <div className="flex items-center gap-2">
          <Grip />
          <svg width="18" height="16" viewBox="0 0 18 16"><rect x="1" y="6" width="16" height="8" rx="1" fill="#d9d9d9" /><path d="M3 8.500h12M3 11.500h12" stroke="#555" strokeDasharray="1.500 1" /><path d="M5 5c0-4 5 0 8-3.500" stroke="#aaa" fill="none" /></svg>
          <svg width="16" height="16" viewBox="0 0 16 16"><circle cx="8" cy="8" r="7.300" fill="#0f20a0" stroke="#dfe6ff" /><path d="M5.500 6c0-3 5-3 5 0 0 1.700-2.500 1.700-2.500 3.500M8 11v1.700" stroke="#fff" strokeWidth="1.700" fill="none" /></svg>
          <svg width="9" height="20" viewBox="0 0 9 20" fill="none" stroke="#fff"><path d="M2.500 3V1h6v4h-2M.5 3.500h6v4h-6z" /><path d="M2 14h5l-2.500 3z" fill="#fff" stroke="none" /></svg>
        </div>
        <div className="flex items-center gap-2 pl-[9px]">
          <Swirl size={16} />
          <svg width="16" height="16" viewBox="0 0 16 16"><rect width="16" height="16" rx="2" fill="#fff" /><path d="M4 10V6.500a4 4 0 0 1 7.500-1L14 9H9" fill="none" stroke="#1a7be0" strokeWidth="2.500" /><path d="M2 11h12v1.500H2zM2 13.300h12v1.500H2z" fill="#f58a1f" /></svg>
          <Browser size={16} />
          <svg width="16" height="18" viewBox="0 0 16 18"><path d="M3 1h5v4H3zM1 5h9v8H1zM4 13h3v4H4z" fill="#a6a6a6" stroke="#555" strokeWidth=".6" /><circle cx="11" cy="13" r="4.500" fill="#2fa82f" /><path d="M8.800 13l1.700 1.800 2.800-3.500" stroke="#fff" strokeWidth="1.300" fill="none" /></svg>
          <svg width="16" height="16" viewBox="0 0 16 16"><path d="M1 5h3l5-4v14l-5-4H1z" fill="#d9674a" stroke="#f5c0ae" strokeWidth=".6" /><path d="M11 5q2 3 0 6M13.500 3q3 5 0 10" stroke="#8b3a2e" fill="none" /></svg>
          <svg width="16" height="16" viewBox="0 0 16 16"><circle cx="8" cy="8" r="8" fill="#f7c916" /><path d="M8 0a8 8 0 0 1 7.500 6L11 4 3 12 .5 10A8 8 0 0 1 8 0z" fill="#46b233" /><circle cx="8" cy="8" r="5" fill="#f9dc2b" /><path d="M8 4.500v7M4.500 8h7" stroke="#1b8a2b" strokeWidth="2.200" /></svg>
          <span className="flex size-4 items-center justify-center rounded-xs bg-[#fbaa1e]"><CloudMark color="#fff" size={13} /></span>
          <svg width="16" height="16" viewBox="0 0 16 16" fill="#fff"><path d="M0 12h2v2H0zM3.500 10h2v4h-2zM7 8h2v6H7zM10.500 5.500h2V14h-2zM14 3h2v11h-2z" /></svg>
          <svg width="16" height="16" viewBox="0 0 16 16" fill="none" stroke="#fff"><path d="M1 5.500h2.500L7 2v12l-3.500-3.500H1z" fill="#fff" /><path d="M9 5.500q2 2.500 0 5M11.500 3.500q3.500 4.500 0 9" /></svg>
        </div>
        <time className="w-[94px] pr-[6px] text-center text-xs leading-[18px]">
          15:48
          <br />
          2024/12/25
        </time>
        <span className="mr-3 flex h-[14px] w-4 items-center justify-center bg-white">
          <svg width="5" height="6"><path d="M0 0l5 3-5 3z" fill="#111" /></svg>
        </span>
        <button aria-label="显示桌面" className="h-full w-[14px] border border-[#6d8fb0] bg-linear-to-b from-white/30 to-white/5" />
      </div>
    </div>
  );
}

export default function App() {
  return (
    <div className={`flex h-screen flex-col overflow-hidden bg-white ${ui}`}>
      <TitleBar />
      <Ribbon />
      <PageTabs />
      <main className="flex min-h-0 flex-1 flex-col border-t border-[#dcdcdc]">
        <div className="min-h-0 flex-1 overflow-hidden">
          <ItemTable />
        </div>
        <DetailPane />
      </main>
      <StatusBar />
      <Taskbar />
    </div>
  );
}
